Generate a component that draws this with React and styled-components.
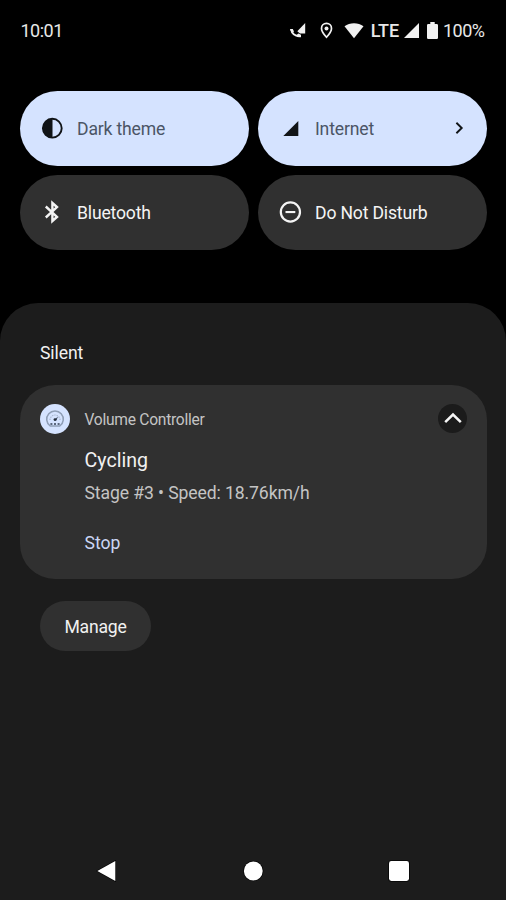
import React from "react";
import styled, { createGlobalStyle } from "styled-components";

const GlobalStyle = createGlobalStyle`
  * { box-sizing: border-box; }
  body { margin: 0; background: #000; }
  button { border: 0; margin: 0; font: inherit; text-align: left; }
`;

const Screen = styled.div`
  display: flex;
  flex-direction: column;
  width: 506px;
  height: 900px;
  background: #000;
  color: #f1f1f1;
  font-family: Roboto, "Liberation Sans", sans-serif;
  overflow: hidden;
`;

const StatusBar = styled.header`
  display: flex;
  justify-content: space-between;
  align-items: center;
  height: 61px;
  padding: 0 21.5px 0 20.5px;
`;

const StatusText = styled.span`
  margin-right: ${(p) => p.$gap || 0}px;
  font-size: 18px;
  letter-spacing: ${(p) => p.$spacing ?? -0.5}px;
  font-weight: ${(p) => p.$weight || 400};
  line-height: 24px;
  color: #e8e8e8;
`;

const StatusIcons = styled.div`
  display: flex;
  align-items: center;
`;

const Glyph = styled.svg`
  display: block;
  flex: none;
  width: ${(p) => p.$w}px;
  height: ${(p) => p.$h || p.$w}px;
  margin-right: ${(p) => p.$gap || 0}px;
  fill: currentColor;
`;

const Tiles = styled.section`
  display: grid;
  grid-template-columns: 229px 229px;
  grid-auto-rows: 74.5px;
  gap: 9.5px 9px;
  padding: 30px 19px 53.5px 20px;
`;

const Tile = styled.button`
  display: flex;
  align-items: center;
  padding: 0 22px 0 20px;
  border-radius: 38px;
  background: ${(p) => (p.$active ? "#d5e3ff" : "#303030")};
  color: ${(p) => (p.$active ? "#111417" : "#f4f4f4")};
`;

const TileLabel = styled.span`
  flex: 1;
  margin-left: 13px;
  padding-top: 1.5px;
  font-size: 17.6px;
  letter-spacing: -0.17px;
  line-height: 24px;
  color: ${(p) => (p.$active ? "#4b5566" : "#f4f4f4")};
`;

const Shade = styled.main`
  flex: 1;
  display: flex;
  flex-direction: column;
  align-items: flex-start;
  padding: 0 19px 0 20px;
  border-radius: 38px 38px 0 0;
  background: #1c1c1c;
`;

const SectionTitle = styled.h2`
  margin: 38px 0 19.5px 20px;
  font-size: 17.6px;
  letter-spacing: -0.1px;
  font-weight: 400;
  line-height: 24px;
  color: #f1f1f1;
`;

const Card = styled.article`
  width: 467px;
  height: 194.5px;
  padding: 18.5px 20px 0;
  border-radius: 35px;
  background: #303030;
`;

const CardHeader = styled.div`
  display: flex;
  align-items: center;
  height: 31px;
`;

const AppName = styled.span`
  flex: 1;
  margin-left: 14.5px;
  padding-top: 2px;
  font-size: 15.6px;
  letter-spacing: -0.27px;
  line-height: 20px;
  color: #c4c4c4;
`;

const AppBadge = styled.span`
  display: grid;
  place-items: center;
  width: 30px;
  height: 30px;
  border-radius: 50%;
  background: #d5e3ff;
  color: #56647a;
`;

const Collapse = styled.button`
  display: grid;
  place-items: center;
  width: 29px;
  height: 29px;
  padding: 0;
  border-radius: 50%;
  background: #1b1b1b;
  color: #f6f6f6;
`;

const CardBody = styled.div`
  display: flex;
  flex-direction: column;
  align-items: flex-start;
  padding: 13.5px 0 0 44.5px;
`;

const CardTitle = styled.h3`
  margin: 0;
  font-size: 19.6px;
  font-weight: 400;
  line-height: 26px;
  color: #f1f1f1;
`;

const CardText = styled.p`
  margin: 7px 0 26.2px;
  font-size: 17.6px;
  letter-spacing: -0.1px;
  line-height: 24px;
  color: #c4c4c4;
`;

const Action = styled.button`
  padding: 0;
  background: none;
  font-size: 17.6px;
  line-height: 24px;
  color: #cbd6f4;
`;

const Manage = styled.button`
  width: 111px;
  height: 49.5px;
  margin: 22px 0 0 20px;
  border-radius: 25px;
  padding: 2px 0 0;
  background: #303030;
  font-size: 17.6px;
  letter-spacing: -0.2px;
  text-align: center;
  line-height: 24px;
  color: #f1f1f1;
`;

const NavBar = styled.nav`
  display: grid;
  grid-template-columns: repeat(3, 146px);
  justify-items: center;
  justify-content: center;
  align-items: center;
  height: 58px;
  background: #1c1c1c;
  color: #fff;
`;

const Network = () => (
  <Glyph $w={17} $gap={14} viewBox="0 0 17 17">
    <path d="M16.2 1V11.4H11L8.3 9.2Z" />
    <path d="M2.2 7.6C3 11.6 5.8 13.9 10.4 14.2" fill="none" stroke="currentColor" strokeWidth="2" />
    <path d="M0.9 7H3.8L5 9.6L3 11.2ZM7.6 12.9L9.4 11.4L12 12.8V15.3L8 15Z" />
  </Glyph>
);

const Pin = () => (
  <Glyph $w={13} $h={17} $gap={11} viewBox="0 0 13 17">
    <path d="M6.5 1.4C3.5 1.4 1.5 3.6 1.5 6.4C1.5 9.7 6.5 15.2 6.5 15.2S11.5 9.7 11.5 6.4C11.5 3.6 9.5 1.4 6.5 1.4Z" fill="none" stroke="currentColor" strokeWidth="1.7" />
    <circle cx="6.5" cy="6.4" r="2" />
  </Glyph>
);

const Wifi = () => (
  <Glyph $w={20} $h={16} $gap={7} viewBox="0 0 20 16">
    <path d="M10 15.3L0.5 3.3C5.8-.7 14.2-.7 19.5 3.3Z" />
  </Glyph>
);

const Signal = ({ size, gap }) => (
  <Glyph $w={size} $gap={gap} viewBox="0 0 16 16">
    <path d="M16 0V16H0Z" />
  </Glyph>
);

const Battery = () => (
  <Glyph $w={11} $h={17} $gap={5} viewBox="0 0 11 17">
    <path d="M3.3 0H7.7V2H9.7Q11 2 11 3.3V15.7Q11 17 9.7 17H1.3Q0 17 0 15.7V3.3Q0 2 1.3 2H3.3Z" />
  </Glyph>
);

const Contrast = () => (
  <Glyph $w={24} viewBox="0 0 24 24">
    <circle cx="12.3" cy="12.2" r="9.4" fill="none" stroke="currentColor" strokeWidth="1.9" />
    <path d="M12.5 2.7A9.5 9.5 0 0 0 12.5 21.7Z" />
  </Glyph>
);

const Bluetooth = () => (
  <Glyph $w={24} viewBox="0 0 24 24">
    <path d="M5.8 6.5L17 16.9L12.4 21V3L17 7.1L5.8 17.5" fill="none" stroke="currentColor" strokeWidth="2.4" />
  </Glyph>
);

const InternetIcon = () => (
  <Glyph $w={24} viewBox="0 0 24 24">
    <path d="M20.3 5V20H5.3Z" />
  </Glyph>
);

const Disturb = () => (
  <Glyph $w={24} viewBox="0 0 24 24">
    <circle cx="12.4" cy="12" r="9.6" fill="none" stroke="currentColor" strokeWidth="2.2" />
    <path d="M7.5 11H17.3V13.1H7.5Z" />
  </Glyph>
);

const ChevronRight = () => (
  <Glyph $w={12} viewBox="0 0 12 12">
    <path d="M3.4 0.8L8.7 6L3.4 11.2" fill="none" stroke="currentColor" strokeWidth="1.9" />
  </Glyph>
);

const Speedometer = () => (
  <Glyph $w={20} viewBox="0 0 20 20">
    <path d="M5.2 17A8.3 8.3 0 1 1 14.8 17Z" fill="none" stroke="#8f9eb6" strokeWidth="1.5" />
    <path d="M5 11A5 5 0 0 1 15 11" fill="none" stroke="#a9b7cf" strokeWidth="1.2" strokeDasharray="1.4 0.9" />
    <path d="M9 11.2L13 7.4L11.4 11.5Z" fill="#394457" />
    <circle cx="10" cy="10.6" r="1.4" fill="#222b39" />
    <path d="M5.4 14.2H7.4V15.8H5.4ZM9 14.2H11V15.8H9ZM12.6 14.2H14.6V15.8H12.6Z" fill="#344054" />
  </Glyph>
);

const ChevronUp = () => (
  <Glyph $w={20} $h={14} viewBox="0 0 20 14">
    <path d="M2.2 10.2L10 2.6L17.8 10.2" fill="none" stroke="currentColor" strokeWidth="2.5" />
  </Glyph>
);

const tiles = [
  { label: "Dark theme", icon: Contrast, active: true },
  { label: "Internet", icon: InternetIcon, active: true, more: true },
  { label: "Bluetooth", icon: Bluetooth },
  { label: "Do Not Disturb", icon: Disturb },
];

export default function App() {
  return (
    <Screen>
      <GlobalStyle />
      <StatusBar>
        <StatusText>10:01</StatusText>
        <StatusIcons>
          <Network />
          <Pin />
          <Wifi />
          <StatusText $weight={500} $gap={5} $spacing={-0.15}>LTE</StatusText>
          <Signal size={15} gap={8} />
          <Battery />
          <StatusText>100%</StatusText>
        </StatusIcons>
      </StatusBar>
      <Tiles>
        {tiles.map(({ label, icon: Icon, active, more }) => (
          <Tile key={label} $active={active}>
            <Icon />
            <TileLabel $active={active}>{label}</TileLabel>
            {more && <ChevronRight />}
          </Tile>
        ))}
      </Tiles>
      <Shade>
        <SectionTitle>Silent</SectionTitle>
        <Card>
          <CardHeader>
            <AppBadge><Speedometer /></AppBadge>
            <AppName>Volume Controller</AppName>
            <Collapse aria-label="Collapse"><ChevronUp /></Collapse>
          </CardHeader>
          <CardBody>
            <CardTitle>Cycling</CardTitle>
            <CardText>Stage #3 • Speed: 18.76km/h</CardText>
            <Action>Stop</Action>
          </CardBody>
        </Card>
        <Manage>Manage</Manage>
      </Shade>
      <NavBar>
        <Glyph $w={22} viewBox="0 0 22 22">
          <path d="M19.3 1V21L1.3 11Z" stroke="#050505" strokeWidth="1.4" paintOrder="stroke" />
        </Glyph>
        <Glyph $w={22} viewBox="0 0 22 22">
          <circle cx="11.3" cy="11" r="9.4" stroke="#050505" strokeWidth="1.6" paintOrder="stroke" />
        </Glyph>
        <Glyph $w={24} viewBox="0 0 24 24">
          <rect x="2" y="2" width="20" height="20" rx="2.4" stroke="#050505" strokeWidth="1.6" paintOrder="stroke" />
        </Glyph>
      </NavBar>
    </Screen>
  );
}
